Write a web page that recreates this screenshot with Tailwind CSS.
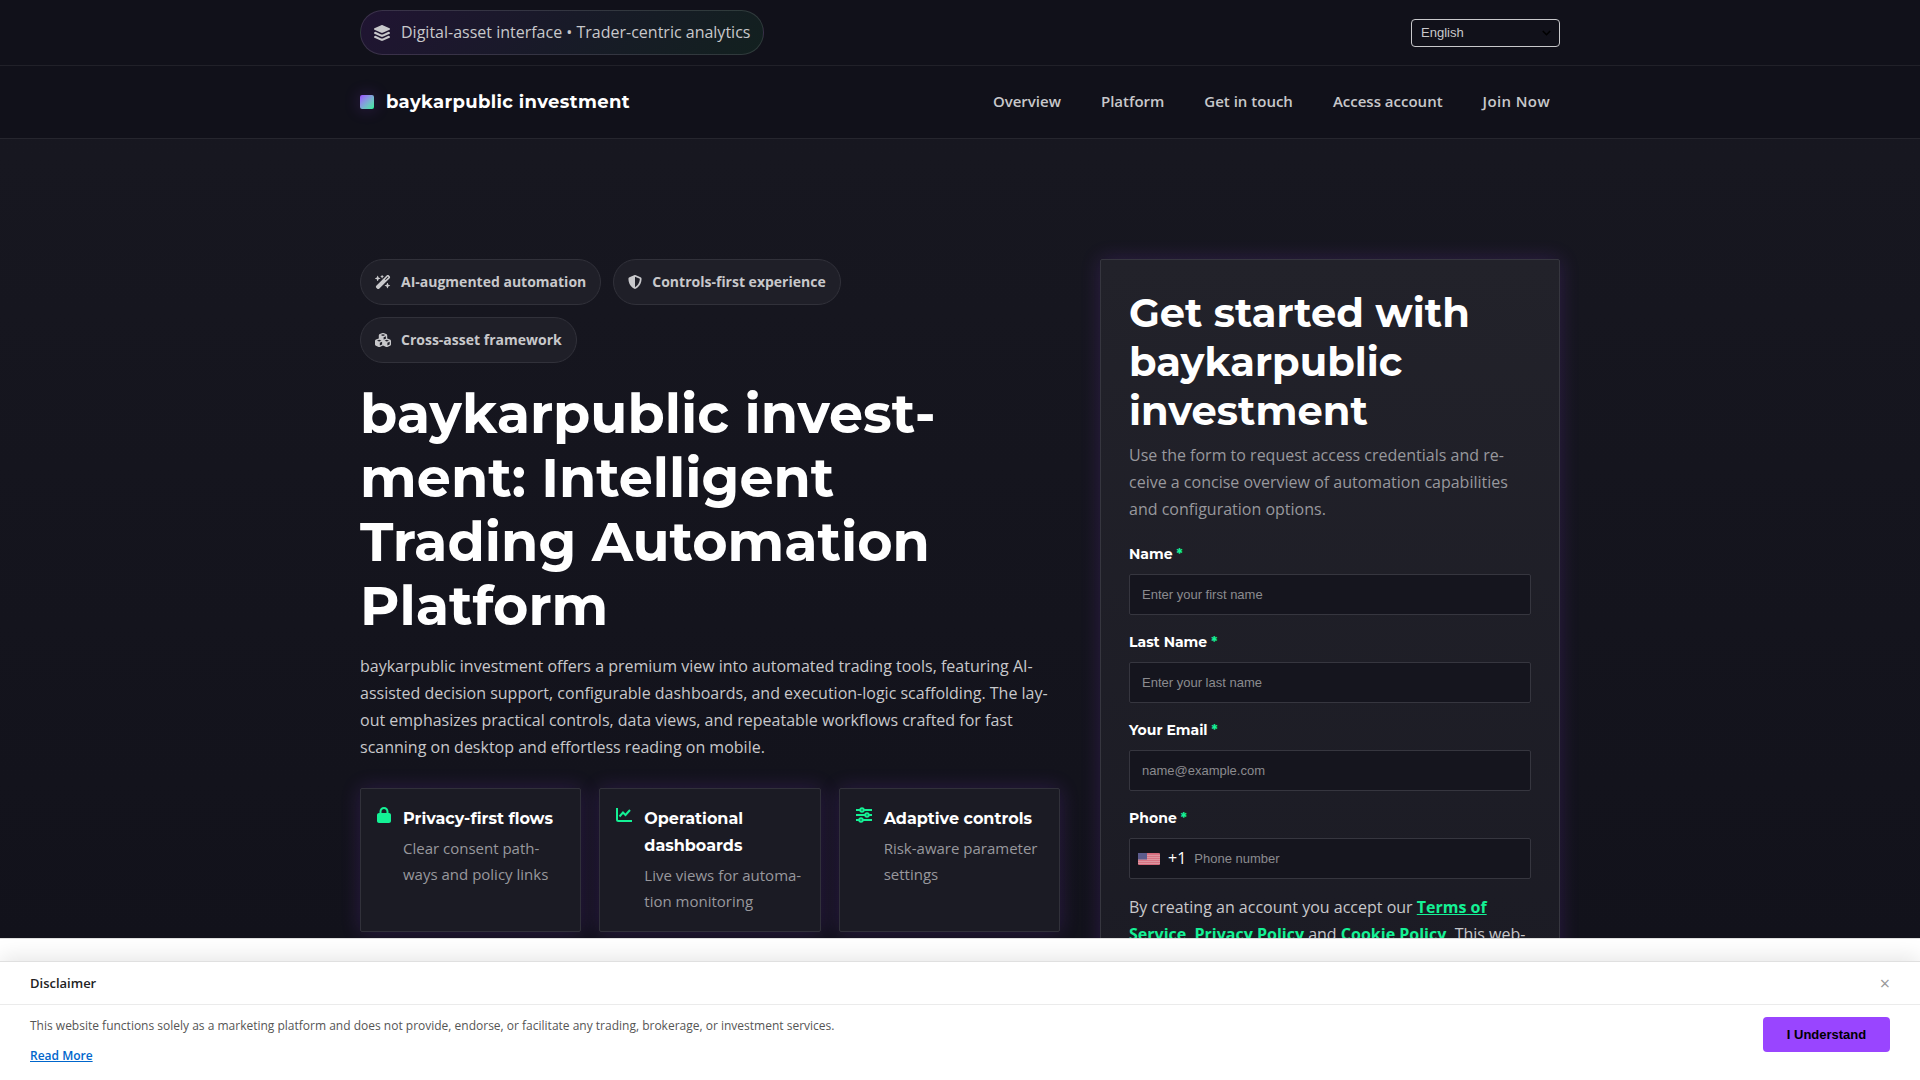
<!DOCTYPE html>
<html lang="en">
<head>
<meta charset="utf-8">
<meta name="viewport" content="width=device-width, initial-scale=1">
<title>baykarpublic investment</title>
<script src="https://cdn.jsdelivr.net/npm/@tailwindcss/browser@4"></script>
</head>
<body class="flex h-screen flex-col overflow-hidden bg-[#13131c] font-['Open_Sans',sans-serif] text-base leading-[27px] text-[#c8c8cb]">
<div class="min-h-0 flex-1 overflow-y-auto bg-linear-to-b from-[#181821] to-[#12121b] [scrollbar-width:none]">
  <div class="border-b border-[#212129] bg-[#11111a]">
    <div class="mx-auto flex max-w-[1200px] items-center justify-between py-[10px]">
      <div class="flex items-center gap-[11px] rounded-full border border-white/12 bg-linear-135 from-[#201432] via-[#181a28] to-[#12201f] px-[13px] py-2">
        <svg class="size-4" viewBox="0 0 512 512" fill="currentColor"><path d="M232.500 5.200c14.900-6.900 32.100-6.900 47 0l218.600 101c8.500 3.900 13.900 12.400 13.900 21.800s-5.400 17.900-13.900 21.800l-218.600 101c-14.900 6.900-32.100 6.900-47 0L13.900 149.800C5.400 145.800 0 137.300 0 128s5.400-17.900 13.900-21.800L232.500 5.200zM48.100 218.400l164.300 75.900c27.700 12.800 59.600 12.800 87.300 0l164.300-75.900 34.100 15.800c8.500 3.900 13.900 12.400 13.900 21.800s-5.400 17.900-13.900 21.800l-218.600 101c-14.900 6.900-32.100 6.900-47 0L13.900 277.800C5.400 273.800 0 265.300 0 256s5.400-17.900 13.900-21.800l34.200-15.800zM13.900 362.200l34.100-15.800 164.300 75.900c27.700 12.800 59.600 12.800 87.300 0l164.300-75.900 34.100 15.800c8.500 3.900 13.900 12.400 13.900 21.800s-5.400 17.900-13.900 21.800l-218.600 101c-14.900 6.900-32.100 6.900-47 0L13.900 405.800C5.400 401.800 0 393.300 0 384s5.400-17.900 13.900-21.800z"/></svg>
        <span>Digital-asset interface • Trader-centric analytics</span>
      </div>
      <div class="relative">
        <select aria-label="Language" class="block h-7 w-[149px] appearance-none rounded-[4px] border border-[#c8c8cb] bg-transparent px-[9px] font-['Liberation_Sans',sans-serif] text-[13px] leading-4"><option>English</option></select>
        <svg class="pointer-events-none absolute top-[10px] right-[9px] h-2 w-[9px]" viewBox="0 0 9 8" fill="none" stroke="#000" stroke-width="1.600"><path d="M.8 2l3.700 3.700L8.200 2"/></svg>
      </div>
    </div>
  </div>
  <header class="border-b border-[#26262e] bg-[#11111a]">
    <div class="mx-auto flex h-18 max-w-[1200px] items-center justify-between">
      <a href="#" class="flex items-center gap-3 font-['Montserrat','Inter',sans-serif] text-lg font-bold tracking-[0.02em] text-white"><span class="size-[14px] rounded-[2px] bg-linear-135 from-[#9945ff] to-[#14f195] shadow-[0_0_16px_rgba(153,69,255,0.250)]"></span>baykarpublic investment</a>
      <nav class="flex gap-10 pr-[10px] pb-[2px] text-[15px] leading-[26px] font-semibold">
        <a href="#">Overview</a><a href="#">Platform</a><a href="#">Get in touch</a><a href="#">Access account</a><a href="#" class="tracking-wide">Join Now</a>
      </nav>
    </div>
  </header>
  <main class="mx-auto grid max-w-[1200px] grid-cols-[minmax(0,1fr)_460px] items-start gap-10 pt-30 pb-20">
    <section>
      <ul class="flex flex-wrap gap-3 text-sm leading-[26px] font-bold">
        <li class="flex items-center gap-[10px] rounded-full border border-[#31313a] bg-[#1f1f28] px-[14px] py-[9px]">
          <svg class="size-4" viewBox="0 0 576 512" fill="currentColor"><path d="M234.700 42.700L197 56.800c-3 1.100-5 4-5 7.200s2 6.100 5 7.200l37.700 14.100L248.800 123c1.100 3 4 5 7.200 5s6.100-2 7.200-5l14.100-37.700L315 71.200c3-1.100 5-4 5-7.200s-2-6.100-5-7.200L277.300 42.700 263.200 5c-1.100-3-4-5-7.200-5s-6.100 2-7.200 5L234.700 42.700zM46.100 395.400c-18.700 18.700-18.700 49.100 0 67.900l34.600 34.600c18.700 18.700 49.100 18.700 67.900 0L529.900 116.500c18.700-18.700 18.700-49.100 0-67.900L495.300 14.100c-18.700-18.700-49.100-18.700-67.900 0L46.100 395.400zM484.600 82.600l-105 105-23.300-23.300 105-105 23.300 23.300zM7.500 117.200C3 118.900 0 123.200 0 128s3 9.100 7.500 10.800L64 160l21.200 56.500c1.700 4.500 6 7.500 10.800 7.500s9.100-3 10.800-7.500L128 160l56.500-21.200c4.500-1.700 7.500-6 7.500-10.800s-3-9.100-7.500-10.800L128 96 106.800 39.500C105.100 35 100.800 32 96 32s-9.100 3-10.800 7.500L64 96 7.500 117.200zm352 256c-4.500 1.700-7.500 6-7.500 10.800s3 9.100 7.500 10.800L416 416l21.200 56.500c1.700 4.500 6 7.500 10.800 7.500s9.100-3 10.800-7.500L480 416l56.500-21.200c4.500-1.700 7.500-6 7.500-10.800s-3-9.100-7.500-10.800L480 352l-21.200-56.500c-1.700-4.500-6-7.500-10.800-7.500s-9.100 3-10.800 7.500L416 352l-56.500 21.200z"/></svg>AI-augmented automation</li>
        <li class="flex items-center gap-[10px] rounded-full border border-[#31313a] bg-[#1f1f28] px-[14px] py-[9px]">
          <svg class="size-[14px]" viewBox="16 0 480 512" fill="currentColor"><path d="M256 0c4.600 0 9.200 1 13.400 2.900L457.700 82.800c22 9.300 38.400 31 38.300 57.200-.5 99.200-41.300 280.700-213.600 363.200-16.700 8-36.100 8-52.800 0C57.300 420.700 16.500 239.200 16 140c-.1-26.200 16.300-47.900 38.300-57.200L242.700 2.900C246.800 1 251.400 0 256 0zm0 66.800V444.800C394 378 431.100 230.100 432 141.400L256 66.800z"/></svg>Controls-first experience</li>
        <li class="flex items-center gap-[10px] rounded-full border border-[#31313a] bg-[#1f1f28] px-[14px] py-[9px]">
          <svg class="size-4" viewBox="0 0 576 512" fill="currentColor"><path d="M290.800 48.600l78.400 29.700L288 109.500 206.800 78.300l78.400-29.700c1.800-.7 3.800-.7 5.700 0zM136 92.500v112.200c-1.300.4-2.600.8-3.900 1.300l-96 36.400C14.400 250.600 0 271.500 0 294.700v119.200c0 22.200 13.200 42.300 33.500 51.300l96 42.200c14.400 6.300 30.700 6.300 45.100 0L288 457.500l113.500 49.900c14.400 6.300 30.700 6.300 45.100 0l96-42.200c20.300-8.900 33.500-29.100 33.500-51.300V294.700c0-23.300-14.400-44.100-36.100-52.400l-96-36.400c-1.300-.5-2.600-.9-3.900-1.300V92.500c0-23.300-14.400-44.100-36.100-52.400l-96-36.400c-12.800-4.800-26.900-4.800-39.700 0l-96 36.400C150.400 48.400 136 69.300 136 92.500zM392 210.600l-82.400 31.200V152.600L392 121v89.600zM154.800 250.900l78.400 29.700L152 311.700 70.800 280.600l78.400-29.700c1.800-.7 3.800-.7 5.700 0zm18.800 204.400V354.800L256 323.200v95.900l-82.400 36.200zM421.200 250.900c1.800-.7 3.800-.7 5.700 0l78.400 29.700L424 311.700 342.800 280.600l78.400-29.700zM523.200 421.200l-77.600 34.100V354.800L528 323.200v90.700c0 3.200-1.900 6-4.800 7.300z"/></svg>Cross-asset framework</li>
      </ul>
      <h1 class="mt-[19px] font-['Montserrat','Inter',sans-serif] text-[54px] leading-16 font-bold text-white">baykarpublic invest-<br>ment: Intelligent<br>Trading Automation<br>Platform</h1>
      <p class="mt-[15px]">baykarpublic investment offers a premium view into automated trading tools, featuring AI-assisted decision support, configurable dashboards, and execution-logic scaffolding. The lay&shy;out emphasizes practical controls, data views, and repeatable workflows crafted for fast scanning on desktop and effortless reading on mobile.</p>
      <div class="mt-[27px] grid grid-cols-3 gap-[18px]">
        <article class="flex gap-3 rounded-[2px] border border-[#31313a] bg-[#1b1b24] p-4 shadow-[0_0_20px_rgba(153,69,255,0.180)]">
          <svg class="mt-[2px] h-4 w-[14px] shrink-0 text-[#14f195]" viewBox="0 0 448 512" fill="currentColor"><path d="M144 144v48h160v-48c0-44.200-35.800-80-80-80s-80 35.800-80 80zM80 192v-48C80 64.500 144.500 0 224 0s144 64.500 144 144v48h16c35.300 0 64 28.700 64 64v192c0 35.300-28.700 64-64 64H64c-35.300 0-64-28.700-64-64V256c0-35.300 28.700-64 64-64h16z"/></svg>
          <div><h3 class="font-['Montserrat','Inter',sans-serif] font-bold text-white">Privacy-first flows</h3><p class="mt-[3px] pb-px text-[15px] leading-[26px] text-[#98989d]">Clear consent path&shy;ways and policy links</p></div>
        </article>
        <article class="flex gap-3 rounded-[2px] border border-[#31313a] bg-[#1b1b24] p-4 shadow-[0_0_20px_rgba(153,69,255,0.180)]">
          <svg class="mt-[2px] size-4 shrink-0 text-[#14f195]" viewBox="0 0 16 16" fill="none" stroke="currentColor" stroke-width="2"><path d="M1 1v11.500q0 1.500 1.500 1.500H16M3.500 9.500l3.500-4 2.500 2.500 4.500-5"/></svg>
          <div><h3 class="font-['Montserrat','Inter',sans-serif] font-bold text-white">Operational dashboards</h3><p class="mt-[3px] pb-px text-[15px] leading-[26px] text-[#98989d]">Live views for automa&shy;tion monitoring</p></div>
        </article>
        <article class="flex gap-3 rounded-[2px] border border-[#31313a] bg-[#1b1b24] p-4 shadow-[0_0_20px_rgba(153,69,255,0.180)]">
          <svg class="mt-[2px] size-4 shrink-0 text-[#14f195]" viewBox="0 0 16 16" fill="none" stroke="currentColor" stroke-width="2"><path d="M0 3h4M8 3h8M0 8h9M13 8h3M0 13h3M7 13h9"/><circle cx="6" cy="3" r="1.700"/><circle cx="11" cy="8" r="1.700"/><circle cx="5" cy="13" r="1.700"/></svg>
          <div><h3 class="font-['Montserrat','Inter',sans-serif] font-bold text-white">Adaptive controls</h3><p class="mt-[3px] pb-px text-[15px] leading-[26px] text-[#98989d]">Risk-aware parameter settings</p></div>
        </article>
      </div>
    </section>
    <section class="rounded-[2px] border border-[#36363f] bg-linear-to-b from-[#22222a] to-[#1b1b24] p-7 shadow-[0_0_20px_rgba(153,69,255,0.180)]">
      <h2 class="font-['Montserrat','Inter',sans-serif] text-[40px] leading-[49px] font-bold text-white">Get started with baykarpublic investment</h2>
      <p class="mt-[7px] text-[#98989d]">Use the form to request access credentials and re&shy;ceive a concise overview of automation capabilities and configuration options.</p>
      <form class="mt-[19px] flex flex-col gap-[15px]">
        <div class="flex flex-col gap-2"><label for="first" class="font-['Montserrat','Inter',sans-serif] text-sm leading-6 font-bold text-white">Name <span class="text-[#14f195]">*</span></label>
        <input id="first" type="text" placeholder="Enter your first name" class="h-[41px] w-full rounded-[2px] border border-[#36363f] bg-[#15151e] px-3 font-['Liberation_Sans',sans-serif] text-[13px] text-white placeholder:text-[#8b8b8f]"></div>
        <div class="flex flex-col gap-2"><label for="last" class="font-['Montserrat','Inter',sans-serif] text-sm leading-6 font-bold text-white">Last Name <span class="text-[#14f195]">*</span></label>
        <input id="last" type="text" placeholder="Enter your last name" class="h-[41px] w-full rounded-[2px] border border-[#36363f] bg-[#15151e] px-3 font-['Liberation_Sans',sans-serif] text-[13px] text-white placeholder:text-[#8b8b8f]"></div>
        <div class="flex flex-col gap-2"><label for="email" class="font-['Montserrat','Inter',sans-serif] text-sm leading-6 font-bold text-white">Your Email <span class="text-[#14f195]">*</span></label>
        <input id="email" type="email" placeholder="name@example.com" class="h-[41px] w-full rounded-[2px] border border-[#36363f] bg-[#15151e] px-3 font-['Liberation_Sans',sans-serif] text-[13px] text-white placeholder:text-[#8b8b8f]"></div>
        <div class="flex flex-col gap-2"><label for="phone" class="font-['Montserrat','Inter',sans-serif] text-sm leading-6 font-bold text-white">Phone <span class="text-[#14f195]">*</span></label>
        <div class="flex h-[41px] items-center rounded-[2px] border border-[#36363f] bg-[#15151e] pl-2">
          <svg class="mr-2 h-3 w-[22px]" viewBox="0 0 22 12"><rect width="22" height="12" rx="1" fill="#d5687a"/><path d="M0 2.300h22M0 4.300h22M0 6.300h22M0 8.300h22M0 10.300h22" stroke="#dfa2aa"/><rect width="9" height="6.500" fill="#5c5c8d"/></svg>
          <span class="text-white">+1</span>
          <input id="phone" type="tel" placeholder="Phone number" class="h-full min-w-0 flex-1 bg-transparent px-2 font-['Liberation_Sans',sans-serif] text-[13px] text-white placeholder:text-[#8b8b8f]">
        </div></div>
        <p>By creating an account you accept our <a href="#" class="font-bold text-[#14f195] underline">Terms of Service</a>, <a href="#" class="font-bold text-[#14f195] underline">Privacy Policy</a> and <a href="#" class="font-bold text-[#14f195] underline">Cookie Policy</a>. This web&shy;site</p>
      </form>
    </section>
  </main>
</div>
<footer class="shrink-0 border-t border-[#e0e0e0] bg-white pt-[22px]">
  <div class="border-t border-[#e0e0e0] bg-white shadow-[0_-4px_20px_rgba(0,0,0,0.100)]">
    <div class="flex h-[43px] items-center justify-between border-b border-[#ebebeb] px-[30px]">
      <h2 class="text-[13px] leading-5 font-semibold text-[#222]">Disclaimer</h2>
      <button type="button" aria-label="Close" class="p-0 text-lg leading-5 text-[#999]">×</button>
    </div>
    <div class="flex items-start justify-between px-[30px] pt-3 pb-[15px]">
      <div class="text-xs leading-[18px] text-[#555]"><p>This website functions solely as a marketing platform and does not provide, endorse, or facilitate any trading, brokerage, or investment services.</p><a href="#" class="mt-3 block w-fit font-semibold text-[#0066cc] underline">Read More</a></div>
      <button type="button" class="h-[35px] w-[127px] rounded-[4px] bg-[#9945ff] font-['Liberation_Sans',sans-serif] text-[13px] leading-4 font-bold text-black">I Understand</button>
    </div>
  </div>
</footer>
</body>
</html>
